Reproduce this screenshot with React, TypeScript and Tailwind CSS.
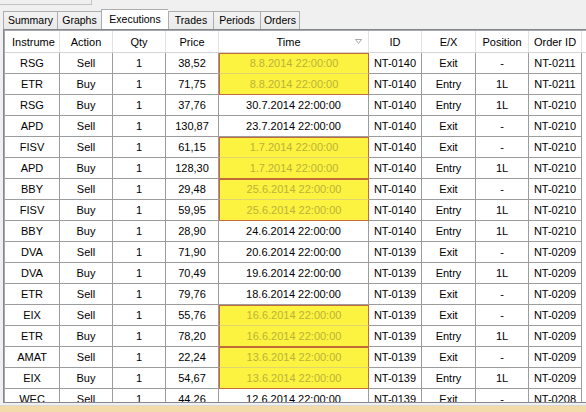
import React from 'react';

type Row = {
    inst: string;
    action: string;
    price: string;
    time: string;
    id: string;
    ex: string;
    order: string;
    hl?: 'top' | 'bottom';
};

const rows: Row[] = [
    { inst: 'RSG', action: 'Sell', price: '38,52', time: '8.8.2014 22:00:00', id: 'NT-0140', ex: 'Exit', order: 'NT-0211', hl: 'top' },
    { inst: 'ETR', action: 'Buy', price: '71,75', time: '8.8.2014 22:00:00', id: 'NT-0140', ex: 'Entry', order: 'NT-0211', hl: 'bottom' },
    { inst: 'RSG', action: 'Buy', price: '37,76', time: '30.7.2014 22:00:00', id: 'NT-0140', ex: 'Entry', order: 'NT-0210' },
    { inst: 'APD', action: 'Sell', price: '130,87', time: '23.7.2014 22:00:00', id: 'NT-0140', ex: 'Exit', order: 'NT-0210' },
    { inst: 'FISV', action: 'Sell', price: '61,15', time: '1.7.2014 22:00:00', id: 'NT-0140', ex: 'Exit', order: 'NT-0210', hl: 'top' },
    { inst: 'APD', action: 'Buy', price: '128,30', time: '1.7.2014 22:00:00', id: 'NT-0140', ex: 'Entry', order: 'NT-0210', hl: 'bottom' },
    { inst: 'BBY', action: 'Sell', price: '29,48', time: '25.6.2014 22:00:00', id: 'NT-0140', ex: 'Exit', order: 'NT-0210', hl: 'top' },
    { inst: 'FISV', action: 'Buy', price: '59,95', time: '25.6.2014 22:00:00', id: 'NT-0140', ex: 'Entry', order: 'NT-0210', hl: 'bottom' },
    { inst: 'BBY', action: 'Buy', price: '28,90', time: '24.6.2014 22:00:00', id: 'NT-0140', ex: 'Entry', order: 'NT-0210' },
    { inst: 'DVA', action: 'Sell', price: '71,90', time: '20.6.2014 22:00:00', id: 'NT-0139', ex: 'Exit', order: 'NT-0209' },
    { inst: 'DVA', action: 'Buy', price: '70,49', time: '19.6.2014 22:00:00', id: 'NT-0139', ex: 'Entry', order: 'NT-0209' },
    { inst: 'ETR', action: 'Sell', price: '79,76', time: '18.6.2014 22:00:00', id: 'NT-0139', ex: 'Exit', order: 'NT-0209' },
    { inst: 'EIX', action: 'Sell', price: '55,76', time: '16.6.2014 22:00:00', id: 'NT-0139', ex: 'Exit', order: 'NT-0209', hl: 'top' },
    { inst: 'ETR', action: 'Buy', price: '78,20', time: '16.6.2014 22:00:00', id: 'NT-0139', ex: 'Entry', order: 'NT-0209', hl: 'bottom' },
    { inst: 'AMAT', action: 'Sell', price: '22,24', time: '13.6.2014 22:00:00', id: 'NT-0139', ex: 'Exit', order: 'NT-0209', hl: 'top' },
    { inst: 'EIX', action: 'Buy', price: '54,67', time: '13.6.2014 22:00:00', id: 'NT-0139', ex: 'Entry', order: 'NT-0209', hl: 'bottom' },
    { inst: 'WEC', action: 'Sell', price: '44,26', time: '12.6.2014 22:00:00', id: 'NT-0139', ex: 'Exit', order: 'NT-0208' },
];

const tabs = [
    { label: 'Summary', w: 'w-[54px]' },
    { label: 'Graphs', w: 'w-[44px]' },
    { label: 'Executions', w: 'w-[67px]', active: true },
    { label: 'Trades', w: 'w-[45px]' },
    { label: 'Periods', w: 'w-[47px]' },
    { label: 'Orders', w: 'w-[40px]' },
];

const cell = 'h-full flex items-center justify-center border-r border-[#9c9c9c] shrink-0 whitespace-nowrap overflow-hidden';
const head = 'h-full flex items-center justify-center pt-[2px] border-r border-[#e2e2e2] shrink-0 whitespace-nowrap overflow-hidden';

const App: React.FC = () => {
    return (
        <div className="w-[586px] h-[412px] bg-[#f0f0f0] overflow-hidden flex flex-col text-[11px] text-black" style={{ fontFamily: '"Liberation Sans", Arial, sans-serif' }}>
            {/* top control remnant */}
            <div className="h-[9px] shrink-0">
                <div className="w-[92px] h-[5px] border-b border-r border-[#c4c4c4]"></div>
            </div>

            {/* tabs */}
            <div className="h-[20px] shrink-0 flex items-end pl-[3px]">
                {tabs.map((t, i) => (
                    <div
                        key={t.label}
                        className={`${t.w} flex items-center justify-center border-t border-l border-[#acacac] text-[10.5px] ${i === tabs.length - 1 ? 'border-r' : ''} ${t.active ? 'h-[20px] bg-white' : 'h-[18px] bg-gradient-to-b from-[#f3f3f3] to-[#e9e9e9]'}`}
                    >
                        {t.label}
                    </div>
                ))}
            </div>

            {/* grid */}
            <div className="h-[374px] w-[620px] ml-[3px] shrink-0 border border-[#828790] bg-white">
                <div className="h-full border-t border-l border-[#a8a8a8] overflow-hidden">
                    {/* header */}
                    <div className="h-[22px] flex border-b border-[#d5d5d5] bg-white">
                        <div className={`${head} w-[55px] justify-start pl-[7px]`}>Instrume</div>
                        <div className={`${head} w-[53px]`}>Action</div>
                        <div className={`${head} w-[53px]`}>Qty</div>
                        <div className={`${head} w-[53px]`}>Price</div>
                        <div className={`${head} w-[150px] relative pr-[10px]`}>
                            Time
                            <svg className="absolute right-[6px] top-[8px]" width="7" height="5" viewBox="0 0 7 5">
                                <path d="M0.5 0.5 H6.5 L3.5 4.5 Z" fill="none" stroke="#a8a8a8" strokeWidth="1" />
                            </svg>
                        </div>
                        <div className={`${head} w-[53px]`}>ID</div>
                        <div className={`${head} w-[54px]`}>E/X</div>
                        <div className={`${head} w-[53px]`}>Position</div>
                        <div className={`${head} w-[53px]`}>Order ID</div>
                        <div className="h-full flex-1"></div>
                    </div>

                    {/* rows */}
                    {rows.map((r, i) => {
                        const isEntry = r.ex === 'Entry';
                        const timeCls = r.hl
                            ? `bg-[#fbf33f] text-[#bbb23a] border-l border-l-[#c46a3a] border-r-[#c46a3a] ${r.hl === 'top' ? 'border-t border-t-[#c46a3a] border-b border-b-[#e0d46c]' : 'border-b border-b-[#c46a3a]'}`
                            : 'border-b border-[#9c9c9c]';
                        return (
                            <div key={i} className="h-[21px] flex">
                                <div className={`${cell} w-[55px] border-b`}>{r.inst}</div>
                                <div className={`${cell} w-[53px] border-b`}>{r.action}</div>
                                <div className={`${cell} w-[53px] border-b`}>1</div>
                                <div className={`${cell} w-[53px] border-b`}>{r.price}</div>
                                <div className={`${cell} w-[150px] ${timeCls}`}>{r.time}</div>
                                <div className={`${cell} w-[53px] border-b`}>{r.id}</div>
                                <div className={`${cell} w-[54px] border-b`}>{r.ex}</div>
                                <div className={`${cell} w-[53px] border-b`}>{isEntry ? '1L' : '-'}</div>
                                <div className={`${cell} w-[53px] border-b`}>{r.order}</div>
                                <div className="h-full flex-1"></div>
                            </div>
                        );
                    })}
                </div>
            </div>

            {/* bottom */}
            <div className="h-[3px] shrink-0 border-b border-[#d9d9d9]"></div>
            <div className="h-[6px] shrink-0 bg-[#f2dba8]"></div>
        </div>
    );
};

export default App;
